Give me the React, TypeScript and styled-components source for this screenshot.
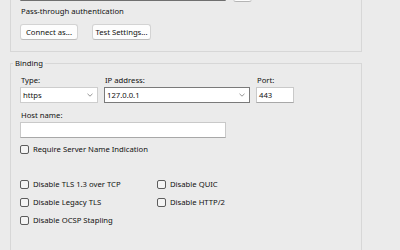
import styled, { createGlobalStyle } from "styled-components";

const GlobalStyle = createGlobalStyle`
  html, body {
    margin: 0;
    padding: 0;
    background: #ebebeb;
  }
  body {
    font-family: "Noto Sans", "Liberation Sans", sans-serif;
    font-size: 7.7px;
    color: #111;
  }
`;

const Page = styled.div`
  width: 400px;
  height: 250px;
  overflow: hidden;
  padding-left: 10px;
  box-sizing: border-box;
`;

// top group box, its upper part is scrolled off the picture
const TopGroup = styled.div`
  width: 352px;
  margin-top: -19px;
  box-sizing: border-box;
  border: 1px solid #d7d7d7;
  border-top: none;
  padding: 0 0 11px 9px;
`;

const Row = styled.div<{ gap?: number; top?: number }>`
  display: flex;
  align-items: flex-start;
  gap: ${(p) => p.gap ?? 0}px;
  margin-top: ${(p) => p.top ?? 0}px;
`;

const TextBox = styled.div<{ w: number; dark?: boolean }>`
  width: ${(p) => p.w}px;
  height: 16px;
  box-sizing: border-box;
  background: #fff;
  border: 1px solid ${(p) => (p.dark ? "#7a7a7a" : "#c9c9c9")};
  border-bottom-color: ${(p) => (p.dark ? "#7a7a7a" : "#a8a8a8")};
  line-height: 14px;
  padding-left: 2px;
  white-space: nowrap;
`;

const CutBox = styled(TextBox)`
  height: 20px;
  border-color: #bdbdbd;
  border-bottom-color: #6f6f6f;
`;

const SmallButton = styled.div`
  width: 19px;
  height: 21px;
  box-sizing: border-box;
  background: #fdfdfd;
  border: 1px solid #cfcfcf;
  border-bottom-color: #b5b5b5;
  border-radius: 3px;
`;

const Text = styled.div<{ top?: number; left?: number }>`
  line-height: 13px;
  margin-top: ${(p) => p.top ?? 0}px;
  padding-left: ${(p) => p.left ?? 0}px;
  white-space: nowrap;
`;

const Button = styled.div<{ w: number }>`
  width: ${(p) => p.w}px;
  height: 16px;
  box-sizing: border-box;
  background: #fdfdfd;
  border: 1px solid #d3d3d3;
  border-bottom-color: #bcbcbc;
  border-radius: 3px;
  display: flex;
  align-items: center;
  justify-content: center;
  white-space: nowrap;
`;

const Group = styled.div`
  position: relative;
  width: 352px;
  height: 200px;
  margin-top: 11px;
  box-sizing: border-box;
  border: 1px solid #d7d7d7;
  border-bottom: none;
  padding: 10px 0 0 9px;
`;

const Legend = styled.span`
  position: absolute;
  top: -7px;
  left: 2px;
  padding: 0 2px;
  line-height: 13px;
  background: #ebebeb;
`;

const Fields = styled.div`
  display: flex;
  gap: 6px;
`;

const Field = styled.div<{ w: number }>`
  width: ${(p) => p.w}px;
  display: flex;
  flex-direction: column;
  gap: 1px;
`;

const Label = styled.div<{ top?: number }>`
  line-height: 12px;
  padding-left: 1px;
  margin-top: ${(p) => p.top ?? 0}px;
  white-space: nowrap;
`;

const Combo = styled.div<{ dark?: boolean }>`
  height: 16px;
  box-sizing: border-box;
  background: #fff;
  border: 1px solid ${(p) => (p.dark ? "#7a7a7a" : "#cdcdcd")};
  display: flex;
  align-items: center;
  justify-content: space-between;
  padding: 0 4px 0 2px;
`;

const Checks = styled.div`
  display: grid;
  grid-template-columns: 137px auto;
  row-gap: 6px;
  margin-top: 23px;
`;

const CheckRow = styled.label<{ top?: number }>`
  display: flex;
  align-items: center;
  gap: 4px;
  height: 12px;
  margin-top: ${(p) => p.top ?? 0}px;
  white-space: nowrap;
`;

const Box = styled.span`
  width: 9px;
  height: 9px;
  box-sizing: border-box;
  border: 1px solid #5c5c5c;
  border-radius: 2px;
  background: #f4f4f4;
  flex: none;
`;

function Chevron() {
  return (
    <svg width="6" height="4" viewBox="0 0 6 4">
      <path d="M0.5 0.8 L3 3.2 L5.5 0.8" fill="none" stroke="#7a7a7a" strokeWidth="0.8" />
    </svg>
  );
}

function Check({ label, top }: { label: string; top?: number }) {
  return (
    <CheckRow top={top}>
      <Box />
      <span>{label}</span>
    </CheckRow>
  );
}

export default function App() {
  return (
    <Page>
      <GlobalStyle />
      <TopGroup>
        <Row gap={7}>
          <CutBox w={206} />
          <SmallButton />
        </Row>
        <Text top={3} left={1}>Pass-through authentication</Text>
        <Row gap={14} top={6}>
          <Button w={58}>Connect as...</Button>
          <Button w={59}>Test Settings...</Button>
        </Row>
      </TopGroup>

      <Group>
        <Legend>Binding</Legend>
        <Fields>
          <Field w={78}>
            <Label>Type:</Label>
            <Combo>
              <span>https</span>
              <Chevron />
            </Combo>
          </Field>
          <Field w={146}>
            <Label>IP address:</Label>
            <Combo dark>
              <span>127.0.0.1</span>
              <Chevron />
            </Combo>
          </Field>
          <Field w={38}>
            <Label>Port:</Label>
            <TextBox w={38}>443</TextBox>
          </Field>
        </Fields>
        <Label top={6}>Host name:</Label>
        <Row top={1}>
          <TextBox w={206} />
        </Row>
        <Check label="Require Server Name Indication" top={5} />
        <Checks>
          <Check label="Disable TLS 1.3 over TCP" />
          <Check label="Disable QUIC" />
          <Check label="Disable Legacy TLS" />
          <Check label="Disable HTTP/2" />
          <Check label="Disable OCSP Stapling" />
        </Checks>
      </Group>
    </Page>
  );
}
